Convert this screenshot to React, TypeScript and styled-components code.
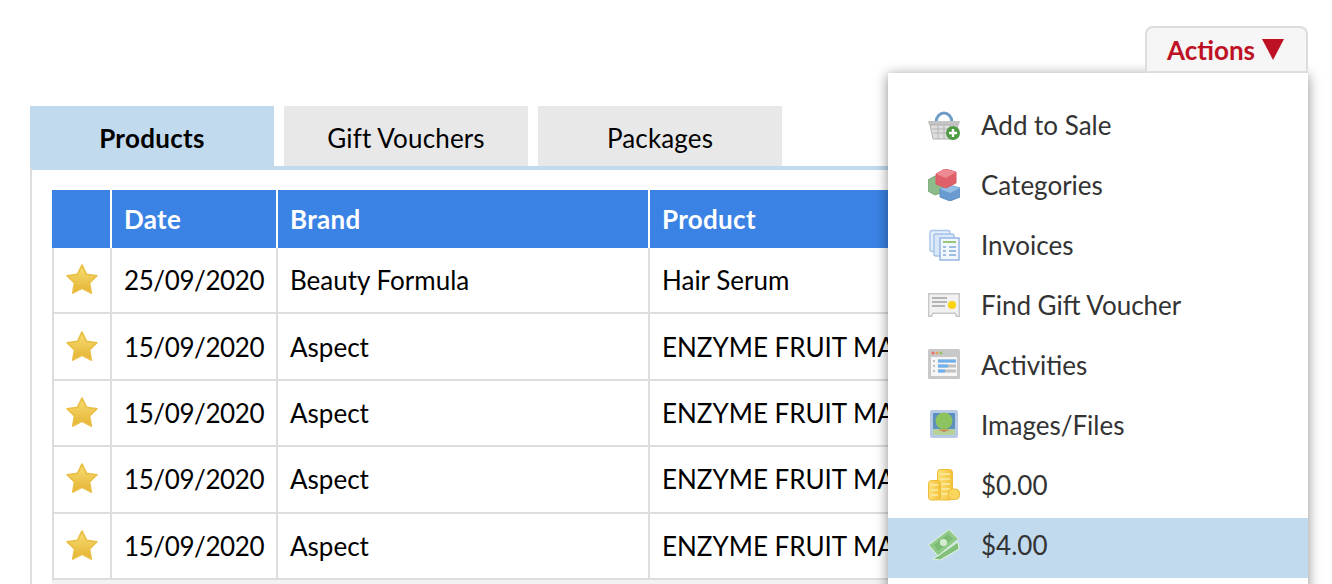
import React from 'react';
import styled, { createGlobalStyle } from 'styled-components';

const Global = createGlobalStyle`
  html, body {
    margin: 0;
    padding: 0;
    background: #ffffff;
    overflow: hidden;
  }
  * {
    box-sizing: border-box;
  }
`

const Page = styled.div`
  width: 1332px;
  height: 584px;
  overflow: hidden;
  padding: 26px 24px 0 30px;
  font-family: Lato, "Open Sans", sans-serif;
  font-size: 26px;
  color: #000000;
`

const TopBar = styled.div`
  display: flex;
  justify-content: flex-end;
`

const ActionsWrap = styled.div`
  position: relative;
`

const ActionsButton = styled.button`
  position: relative;
  z-index: 3;
  display: flex;
  align-items: center;
  gap: 7px;
  width: 163px;
  height: 47px;
  padding: 0 0 0 20px;
  background: #f6f6f6;
  border: 2px solid #dddddd;
  border-radius: 8px 8px 0 0;
  font: bold 26px Lato, sans-serif;
  color: #be1224;
`

const Arrow = styled.span`
  width: 0;
  height: 0;
  border-left: 11px solid transparent;
  border-right: 11px solid transparent;
  border-top: 21px solid #be1224;
`

const Menu = styled.div`
  position: absolute;
  z-index: 2;
  top: 100%;
  right: 0;
  width: 420px;
  padding: 25px 0 24px;
  background: #ffffff;
  box-shadow: 0 2px 12px rgba(0, 0, 0, 0.45);
`

const MenuItem = styled.div<{ $active?: boolean }>`
  display: flex;
  align-items: center;
  gap: 21px;
  height: 60px;
  padding: 0 0 6px 40px;
  color: #333333;
  background: ${p => (p.$active ? '#c1daee' : 'transparent')};

  svg {
    flex: none;
    width: 32px;
    height: 32px;
    filter: blur(0.4px);
  }
`

const Tabs = styled.div`
  display: flex;
  gap: 10px;
  margin-top: 33px;
`

const Tab = styled.div<{ $active?: boolean }>`
  display: flex;
  align-items: center;
  justify-content: center;
  width: 244px;
  height: 60px;
  padding-top: 4px;
  background: ${p => (p.$active ? '#c1daee' : '#e8e8e8')};
  font-weight: ${p => (p.$active ? 'bold' : 'normal')};
  letter-spacing: ${p => (p.$active ? '0.3px' : '0.15px')};
`

const Panel = styled.div`
  border-top: 4px solid #c1daee;
  border-left: 2px solid #dddddd;
  padding: 20px 0 0 20px;
`

const Row = styled.div`
  display: grid;
  grid-template-columns: 58px 166px 372px 1fr;
  height: 66.4px;
  border-bottom: 2px solid #dddddd;
  border-left: 2px solid #dddddd;
`

const HeadRow = styled.div`
  display: grid;
  grid-template-columns: 60px 166px 372px 1fr;
  height: 58px;
  background: #3a82e4;
  color: #ffffff;
  font-weight: bold;
  letter-spacing: 0.3px;
`

const HeadCell = styled.div`
  display: flex;
  align-items: center;
  padding-left: 12px;
  border-right: 2px solid #ffffff;

  &:last-child {
    border-right: none;
  }
`

const Cell = styled.div`
  display: flex;
  align-items: center;
  padding-left: 12px;
  white-space: nowrap;
  overflow: hidden;
  border-right: 2px solid #dddddd;

  svg {
    filter: blur(0.4px);
  }
`

const DateCell = styled(Cell)`
  letter-spacing: -0.4px;
`

const TableFoot = styled.div`
  height: 20px;
  background: #f2f2f2;
`

function Star() {
  return (
    <svg width="32" height="32" viewBox="1 1.5 30 30">
      <defs>
        <linearGradient id="star" x1="0" y1="0" x2="0" y2="1">
          <stop offset="0" stopColor="#f7df73" />
          <stop offset="1" stopColor="#e5b233" />
        </linearGradient>
      </defs>
      <path
        d="M16 2.5l4.2 8.8 9.8 1.2-7 6.7 1.7 9.6-8.7-4.6-8.7 4.6 1.7-9.6-7-6.7 9.8-1.2z"
        fill="url(#star)"
        stroke="#eabf45"
        strokeWidth="1.6"
        strokeLinejoin="round"
      />
    </svg>
  )
}

function BasketIcon() {
  return (
    <svg viewBox="0 0 32 32">
      <path d="M8 13C9 1 23 1 24 13" fill="none" stroke="#6f9cc6" strokeWidth="3" />
      <path d="M0 12h32l-1 4H1z" fill="#c4c4c4" />
      <path d="M2 16h28l-3 14H5z" fill="#dedede" stroke="#b0b0b0" />
      <path d="M4 20h25M5 24h23M10 16v14M16 16v14M22 16v14" stroke="#b4b4b4" strokeWidth="1" />
      <circle cx="25" cy="24" r="7" fill="#4f9a45" />
      <path d="M25 20v8M21 24h8" stroke="#ffffff" strokeWidth="2.4" />
    </svg>
  )
}

function BlocksIcon() {
  return (
    <svg viewBox="0 0 32 32">
      <path d="M0 11l7-4 8 4v12l-8 3-7-4z" fill="#8dbb8a" stroke="#7aa877" />
      <path d="M12 20l9-4 11 3v9l-10 4-10-4z" fill="#6a9bd0" stroke="#5f8fc3" />
      <path d="M12 20l10 4 10-5-11-3z" fill="#93bde6" />
      <path d="M8 5l9-5 11 3v11l-10 5-10-4z" fill="#e0606a" stroke="#d65a64" />
      <path d="M8 5l10 4 10-6-11-3z" fill="#ee8a91" />
    </svg>
  )
}

function PagesIcon() {
  return (
    <svg viewBox="0 0 32 32">
      <rect x="2" y="1.5" width="20" height="21" rx="2" fill="#e3eefb" stroke="#a9c6ea" strokeWidth="1.4" />
      <rect x="6" y="5" width="20" height="22" rx="2" fill="#d9e7f8" stroke="#a3c2e8" strokeWidth="1.4" />
      <rect x="12" y="9" width="19" height="22" fill="#f2f7fd" stroke="#8fb3e0" strokeWidth="1.4" />
      <path d="M15 13h13" stroke="#98c878" strokeWidth="2" />
      <path d="M15 18h3M21 18h7M15 22h3M21 22h7M15 26h3M21 26h7" stroke="#9dbce2" strokeWidth="2" />
    </svg>
  )
}

function VoucherIcon() {
  return (
    <svg viewBox="0 0 32 32">
      <path d="M0.7 4.7h30.6v22.6h-3l-1-3H4.7l-1 3h-3z" fill="#f1f1f1" stroke="#c8c8c8" strokeWidth="1.4" />
      <path d="M4 9h15M4 13h15M4 17h13" stroke="#b4b4b4" strokeWidth="2" />
      <circle cx="24" cy="16" r="4" fill="#fbd312" />
    </svg>
  )
}

function WindowIcon() {
  return (
    <svg viewBox="0 0 32 32">
      <rect x="0" y="0" width="32" height="30" rx="1.5" fill="#c8c8c8" />
      <rect x="3" y="8" width="26" height="19" fill="#f6f6f6" />
      <circle cx="5" cy="4" r="1.5" fill="#ef6b62" />
      <circle cx="9" cy="4" r="1.5" fill="#eba05a" />
      <circle cx="13" cy="4" r="1.5" fill="#8ec35e" />
      <path d="M10 12h18M10 17h18M10 22h18" stroke="#c0c0c0" strokeWidth="3" />
      <path d="M10 12h18M10 17h10M10 22h7" stroke="#6fb0ef" strokeWidth="3" />
      <path d="M5 12h2M5 17h2M5 22h2" stroke="#c0c0c0" strokeWidth="2" />
    </svg>
  )
}

function PictureIcon() {
  return (
    <svg viewBox="0 0 32 32">
      <rect x="2" y="1" width="28" height="28" rx="2" fill="#b7cbe6" />
      <rect x="5" y="4" width="22" height="22" fill="#5d8fc0" />
      <rect x="5" y="20" width="22" height="6" fill="#b6d29a" />
      <path d="M14.5 17h3v6h-3z" fill="#b58a52" />
      <path d="M10 22h12l-3-2h-6z" fill="#c9985c" />
      <circle cx="16" cy="12" r="8.5" fill="#8dc35f" />
    </svg>
  )
}

function CoinsIcon() {
  return (
    <svg viewBox="0 0 32 32">
      <defs>
        <linearGradient id="coin" x1="0" y1="0" x2="1" y2="0">
          <stop offset="0" stopColor="#fde27a" />
          <stop offset="1" stopColor="#f3c136" />
        </linearGradient>
      </defs>
      <rect x="9.5" y="0.5" width="15" height="30.5" rx="3" fill="url(#coin)" stroke="#edbb35" />
      <path d="M12 5h10M12 10h10M12 15h10M12 20h10M12 25h10" stroke="#f9eca8" strokeWidth="1.4" />
      <rect x="0.5" y="11.5" width="12" height="19.5" rx="3" fill="url(#coin)" stroke="#edbb35" />
      <path d="M3 16h7M3 21h7M3 26h7" stroke="#f9eca8" strokeWidth="1.4" />
      <rect x="20.5" y="20" width="11" height="10.5" rx="4" fill="#f8d65e" stroke="#edbb35" />
    </svg>
  )
}

function MoneyIcon() {
  return (
    <svg viewBox="0 0 32 32">
      <path d="M5 30L11 26 30 13 31 20 12 31z" fill="#82bf7b" stroke="#e4f3e2" />
      <path d="M0.5 16L21 0.5 30.5 10 10 27z" fill="#90ca88" stroke="#e4f3e2" />
      <path d="M6 16L20 5 25 10 10 22z" fill="#7cbb74" />
      <circle cx="15.5" cy="13.5" r="3.6" fill="#d3ecd0" />
    </svg>
  )
}

const menuItems = [
  { label: 'Add to Sale', icon: <BasketIcon /> },
  { label: 'Categories', icon: <BlocksIcon /> },
  { label: 'Invoices', icon: <PagesIcon /> },
  { label: 'Find Gift Voucher', icon: <VoucherIcon /> },
  { label: 'Activities', icon: <WindowIcon /> },
  { label: 'Images/Files', icon: <PictureIcon /> },
  { label: '$0.00', icon: <CoinsIcon /> },
  { label: '$4.00', icon: <MoneyIcon />, active: true },
]

const rows = [
  ['25/09/2020', 'Beauty Formula', 'Hair Serum'],
  ['15/09/2020', 'Aspect', 'ENZYME FRUIT MASQUE'],
  ['15/09/2020', 'Aspect', 'ENZYME FRUIT MASQUE'],
  ['15/09/2020', 'Aspect', 'ENZYME FRUIT MASQUE'],
  ['15/09/2020', 'Aspect', 'ENZYME FRUIT MASQUE'],
]

export default function App() {
  return (
    <Page>
      <Global />
      <TopBar>
        <ActionsWrap>
          <ActionsButton>
            Actions <Arrow />
          </ActionsButton>
          <Menu>
            {menuItems.map(item => (
              <MenuItem key={item.label} $active={item.active}>
                {item.icon}
                {item.label}
              </MenuItem>
            ))}
          </Menu>
        </ActionsWrap>
      </TopBar>

      <Tabs>
        <Tab $active>Products</Tab>
        <Tab>Gift Vouchers</Tab>
        <Tab>Packages</Tab>
      </Tabs>

      <Panel>
        <HeadRow>
          <HeadCell />
          <HeadCell>Date</HeadCell>
          <HeadCell>Brand</HeadCell>
          <HeadCell>Product</HeadCell>
        </HeadRow>
        {rows.map((r, i) => (
          <Row key={i}>
            <Cell>
              <Star />
            </Cell>
            <DateCell>{r[0]}</DateCell>
            <Cell>{r[1]}</Cell>
            <Cell>{r[2]}</Cell>
          </Row>
        ))}
        <TableFoot />
      </Panel>
    </Page>
  )
}
